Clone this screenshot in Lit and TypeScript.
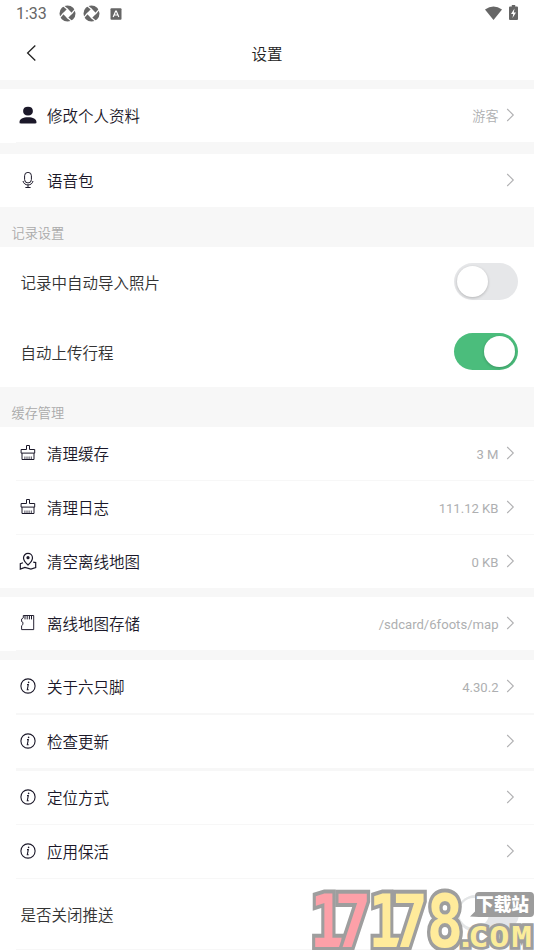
import { LitElement, html, css, svg, nothing } from "lit";
import { customElement, property } from "lit/decorators.js";
import { classMap } from "lit/directives/class-map.js";

const icons: Record<string, unknown> = {
  user: svg`<path fill="#1b1829" stroke="none" d="M9 .8c3.200 0 4.900 1.500 4.900 4.300S12.200 9.600 9 9.600 4.100 7.900 4.100 5.100 5.800.8 9 .8zM.5 16.200c0-3.300 3.500-5 8.500-5s8.500 1.700 8.500 5c0 .8-.4 1.200-1.200 1.200H1.700c-.8 0-1.200-.4-1.200-1.200z"/>`,
  mic: svg`<rect x="5.600" y="1.400" width="6.800" height="10.500" rx="3.300"/><path d="M4 10c.6 2.600 2.400 3.900 5 3.900s4.400-1.300 5-3.900M9 13.900v2.300M6.400 16.500h5.200"/>`,
  broom: svg`<path d="M7.500 5.500V1.500h3v4h5.200v3.600H2.100V5.500zM3 9.100v6.400h12V9.100"/><path stroke-width=".8" d="M5.900 15.500v-3M8 15.500v-3M10.100 15.500v-3M12.300 15.500v-3"/>`,
  map: svg`<g stroke-width="1.200"><path d="M9 13C6.100 10.200 4.500 8.400 4.500 5.900a4.500 4.500 0 0 1 9 0c0 2.500-1.600 4.300-4.500 7.100z"/><path d="M4 10.700l-2.700.9v5.500l4.600-1.600 6 1.600 4.800-1.600v-4.900l-2.500-.4"/></g><circle cx="9" cy="5.700" r="1.600" fill="#1b1829" stroke="none"/>`,
  card: svg`<path stroke-width=".95" d="M4.300 1.500h10.400v14.100H2.600v-3.900l1.300-1.200V8.300L2.600 7.600V5l1.700-1.200z"/><path stroke-width="1" d="M6 2v3.400M8.200 2v3.400M10.400 2v3.400M12.500 2v3.400"/>`,
  info: svg`<circle cx="9" cy="9" r="7.100" stroke-width="1.100"/><path stroke-width="1.100" d="M8 7.600h1.300L8.300 12.700h1.400"/><circle cx="9.600" cy="5.400" r=".8" fill="#1b1829" stroke="none"/>`,
};

@customElement("setting-row")
class SettingRow extends LitElement {
  @property() icon = "";
  @property() label = "";
  @property() value = "";
  static styles = css`
    :host { display: flex; align-items: center; height: 53px; padding: 0 18.500px 0 19px; box-sizing: border-box; background: #fff; }
    .icon { width: 18px; height: 18px; flex: none; margin-right: 10px; fill: none; stroke: #1b1829; stroke-width: 1; margin-top: -1px; }
    .label { font-size: 15.500px; line-height: 24px; color: #1b1829; flex: 1; padding-top: 2px; white-space: nowrap; font-weight: 350; }
    .value { font-size: 13.100px; line-height: 20px; color: #aeafb1; padding-top: 2px; margin-right: 7px; }
    .value.han { font-weight: 350; }
    .arrow { width: 10px; height: 14px; flex: none; fill: none; stroke: #b0b0b2; stroke-width: 1.100; margin-top: -1px; }
  `;
  render() {
    const han = /[\u4e00-\u9fff]/.test(this.value);
    return html`<svg class="icon" viewBox="0 0 18 18">${icons[this.icon]}</svg>
      <span class="label">${this.label}</span>
      ${this.value ? html`<span class=${classMap({ value: true, han })}>${this.value}</span>` : nothing}
      <svg class="arrow" viewBox="0 0 10 14"><path d="M1.200 1 7.300 7 1.200 13"/></svg>`;
  }
}

@customElement("toggle-switch")
class ToggleSwitch extends LitElement {
  @property({ type: Boolean, reflect: true }) on = false;
  static styles = css`
    :host { display: flex; width: 64px; height: 37px; padding: 3px; box-sizing: border-box; border-radius: 19px; background: #e6e7e9; }
    :host([on]) { background: #4bbd7c; justify-content: flex-end; }
    .knob { width: 31px; height: 31px; border-radius: 50%; background: #fff; box-shadow: 0 1px 3px rgba(0, 0, 0, .22); }
  `;
  render() {
    return html`<span class="knob"></span>`;
  }
}

@customElement("site-mark")
class SiteMark extends LitElement {
  static styles = css`
    :host { display: block; width: 226px; height: 61px; }
    svg { display: block; overflow: visible; }
    .digit { font: bold 73px "DejaVu Sans Mono", monospace; stroke: #9e9e9e; stroke-width: 8px; stroke-linejoin: miter; paint-order: stroke; }
    .pink { fill: #fda0a8; }
    .yellow { fill: #ffeb9b; }
    .domain { font: bold 28px "DejaVu Sans Mono", monospace; fill: #fbec9a; stroke: #9e9e9e; stroke-width: 5.500; paint-order: stroke; }
    .tag { font: 900 18px "Noto Sans CJK SC", sans-serif; fill: #fff; }
  `;
  render() {
    const digits = [
      ["1", 2, .78, "pink"], ["7", 26.500, .84, "pink"], ["1", 60.500, .76, "yellow"], ["7", 84, .82, "yellow"], ["8", 118.500, .84, "yellow"],
    ] as const;
    return html`<svg width="226" height="61" viewBox="0 0 226 61">
      <rect x="149" y="6" width="62" height="37" rx="18.500" fill="#e4e5e8"/>
      <circle cx="166" cy="24" r="16" fill="#fff" stroke="#e3e5e6" stroke-width="2"/>
      ${digits.map(([c, x, sx, cls]) => svg`<text class="digit ${cls}" transform="translate(${x} 58) scale(${sx} 1)">${c}</text>`)}
      <path fill="#9c9c9c" d="M171 3h51q4 0 4 4v17q0 4-4 4h-51l-9-.5 5-5V7q0-4 4-4z"/>
      <text class="tag" x="168" y="22" textLength="53" lengthAdjust="spacingAndGlyphs">下载站</text>
      <text class="domain" transform="translate(0 57.500) scale(1.200 1)" x="123 133.500 151 169.500" y="0">.COM</text>
    </svg>`;
  }
}

@customElement("app-root")
class AppRoot extends LitElement {
  static styles = css`
    :host { display: flex; flex-direction: column; position: relative; width: 534px; height: 950px; overflow: hidden; background: #f7f7f7; font-family: Roboto, "Noto Sans CJK SC", sans-serif; color: #333; }
    .status { display: flex; align-items: center; height: 27px; padding: 0 16px; background: #fff; box-sizing: border-box; color: #666; flex: none; }
    .time { font-size: 16px; line-height: 20px; width: 42.500px; padding-top: 1px; }
    .status svg { flex: none; }
    .ring { width: 17px; height: 17px; margin-right: 7.500px; }
    .letter { margin-left: 2px; }
    .space { flex: 1; }
    .wifi { margin-right: 7px; margin-top: -1px; }
    .battery { margin-top: -2px; }
    .header { display: grid; grid-template-columns: 60px 1fr 60px; align-items: center; height: 53px; background: #fff; flex: none; }
    .back { width: 12px; height: 18px; margin-left: 25px; margin-top: -1px; fill: none; stroke: #222; stroke-width: 1.300; }
    .title { text-align: center; font-size: 15.500px; line-height: 24px; color: #222; padding-top: 2px; font-weight: 350; }
    .gap { height: 9px; flex: none; }
    .gap.after { height: 11px; }
    .section { height: 40px; box-sizing: border-box; padding: 17px 11.500px 0; font-size: 13.200px; line-height: 20px; color: #aaa; flex: none; font-weight: 350; }
    .line { height: 1px; margin-left: 16px; box-shadow: -16px 0 #fff; flex: none; }
    .line.thick { height: 3px; }
    .line.short { height: 2px; }
    .plain { display: flex; align-items: center; justify-content: space-between; height: 70px; box-sizing: border-box; padding: 0 16px 0 20.500px; background: #fff; font-size: 15.500px; font-weight: 350; flex: none; }
    .plain span { margin-top: -1px; }
    .plain toggle-switch { margin-top: -2px; }
    setting-row { flex: none; }
    site-mark { position: absolute; left: 308px; top: 889px; }
  `;
  ring() {
    return html`<svg class="ring" viewBox="0 0 17 17"><path fill="#666" fill-rule="evenodd" d="M8.500.5a8 8 0 1 1 0 16 8 8 0 0 1 0-16zM8.500 3.600 3.600 8.500l4.900 4.900 4.900-4.900z"/><path stroke="#fff" stroke-width="1.200" d="M4.300.8l4.700 4M16.200 4.300l-4 4.700M12.700 16.200l-4.700-4M.8 12.700l4-4.700"/></svg>`;
  }
  render() {
    return html`
      <div class="status">
        <span class="time">1:33</span>
        ${this.ring()}${this.ring()}
        <svg class="letter" width="12" height="12" viewBox="0 0 12 12"><rect x=".5" y=".3" width="11" height="11.500" rx="1" fill="#666"/><path d="M3.200 9 5.700 3h.6L8.800 9M4.200 7h3.500" fill="none" stroke="#fff" stroke-width="1.200"/></svg>
        <span class="space"></span>
        <svg class="wifi" width="17" height="14" viewBox="0 0 17 14"><path fill="#666" d="M0 3.500Q8.500-2.500 17 3.500L8.500 14z"/></svg>
        <svg class="battery" width="9" height="15" viewBox="0 0 9 15"><path fill="#666" d="M2.800 0h3.400v1.500H8q1 0 1 1V14q0 1-1 1H1q-1 0-1-1V2.500q0-1 1-1h1.800z"/><path fill="#fff" d="M5.500 3.500 2 9h2.200l-.7 4L7 7.500H4.800z"/></svg>
      </div>
      <div class="header">
        <svg class="back" viewBox="0 0 12 18"><path d="M10.300 1.500 2.600 9l7.700 7.500"/></svg>
        <span class="title">设置</span>
      </div>
      <div class="gap"></div>
      <setting-row icon="user" label="修改个人资料" value="游客"></setting-row>
      <div class="line"></div><div class="gap after"></div>
      <setting-row icon="mic" label="语音包"></setting-row>
      <div class="section">记录设置</div>
      <div class="plain"><span>记录中自动导入照片</span><toggle-switch></toggle-switch></div>
      <div class="plain"><span>自动上传行程</span><toggle-switch on></toggle-switch></div>
      <div class="section">缓存管理</div>
      <setting-row icon="broom" label="清理缓存" value="3 M"></setting-row>
      <div class="line"></div>
      <setting-row icon="broom" label="清理日志" value="111.12 KB"></setting-row>
      <div class="line"></div>
      <setting-row icon="map" label="清空离线地图" value="0 KB"></setting-row>
      <div class="gap"></div>
      <setting-row icon="card" label="离线地图存储" value="/sdcard/6foots/map"></setting-row>
      <div class="line"></div><div class="gap"></div>
      <setting-row icon="info" label="关于六只脚" value="4.30.2"></setting-row>
      <div class="line short"></div>
      <setting-row icon="info" label="检查更新"></setting-row>
      <div class="line thick"></div>
      <setting-row icon="info" label="定位方式"></setting-row>
      <div class="line"></div>
      <setting-row icon="info" label="应用保活"></setting-row>
      <div class="line"></div>
      <div class="plain"><span>是否关闭推送</span></div>
      <div class="line"></div>
      <site-mark></site-mark>`;
  }
}
